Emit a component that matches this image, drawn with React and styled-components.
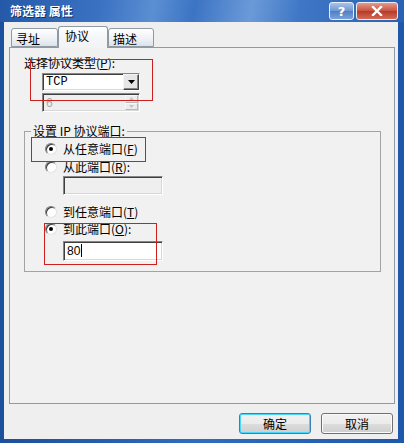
import styled, { createGlobalStyle } from "styled-components";

const GlobalStyle = createGlobalStyle`
  html, body {
    margin: 0;
    padding: 0;
  }
  body {
    font-family: "Noto Sans CJK SC", sans-serif;
    font-size: 12px;
    color: #000;
  }
`;

/*----------window frame + caption--------*/
const Frame = styled.div`
  position: relative;
  width: 404px;
  height: 443px;
  box-sizing: border-box;
  display: flex;
  flex-direction: column;
  overflow: hidden;
  background: linear-gradient(to right, #1c4f9c, #2f6cc0 50%, #1d58ab);
`;

const TitleBar = styled.div`
  height: 22px;
  display: flex;
  align-items: center;
  padding: 0 6px 0 10px;
  background: linear-gradient(100deg, #2559a8 0%, #3b72c2 25%, #5b8fd3 38%, #3c74c4 48%, #6b9ad8 62%, #3f77c6 74%, #2a62b3 100%);
`;

const Title = styled.span`
  color: #fff;
  font-weight: bold;
  font-size: 12px;
  line-height: 14px;
  text-shadow: 1px 1px 0 #0c2f6e;
`;

const CaptionButtons = styled.div`
  margin-left: auto;
  display: flex;
  gap: 2px;
`;

const CaptionButton = styled.div`
  width: ${(p) => p.$w}px;
  height: 18px;
  box-sizing: border-box;
  border: 1px solid #e8eef8;
  border-radius: 3px;
  display: flex;
  align-items: center;
  justify-content: center;
  color: #fff;
  font-family: "DejaVu Sans", sans-serif;
  font-weight: bold;
  font-size: 13px;
  background: ${(p) =>
    p.$close
      ? "linear-gradient(#e39a8c, #c9513f 50%, #b73a28 51%, #d16a55)"
      : "linear-gradient(#a9c3e8, #6d97d2 50%, #4f7fc4 51%, #7aa2d8)"};
`;

/*----------client area--------*/
const Client = styled.div`
  flex: 1;
  margin: 0 6px 4px 4px;
  background: #efefef;
  display: flex;
  flex-direction: column;
  padding-top: 4px;
`;

const TabStrip = styled.div`
  height: 21px;
  display: flex;
  align-items: flex-end;
  padding-left: 7px;
  position: relative;
  z-index: 1;
`;

const Tab = styled.div`
  width: ${(p) => p.$w}px;
  height: ${(p) => (p.$active ? 22 : 19)}px;
  margin-bottom: ${(p) => (p.$active ? -1 : 0)}px;
  box-sizing: border-box;
  border: 1px solid #8f9aa3;
  border-bottom: ${(p) => (p.$active ? "none" : "1px solid #8f9aa3")};
  border-radius: 3px 3px 0 0;
  padding: ${(p) => (p.$active ? "2px 0 0 6px" : "3px 0 0 4px")};
  line-height: 14px;
  font-size: 12px;
  background: ${(p) =>
    p.$active
      ? "linear-gradient(#ffffff, #f4f6fa 50%, #f3f3f3)"
      : "linear-gradient(#ffffff, #eef0f4 60%, #dde2ea)"};
`;

const Panel = styled.div`
  margin: 0 3px 0 5px;
  height: 357px;
  box-sizing: border-box;
  border: 1px solid #8f9aa3;
  background: #f1f1f1;
  padding: 8px 0 0 14px;
  display: flex;
  flex-direction: column;
  align-items: flex-start;
`;

const Label = styled.div`
  line-height: 14px;
  height: 14px;
  white-space: nowrap;
`;

const SunkenBox = styled.div`
  margin: ${(p) => p.$m};
  width: ${(p) => p.$w}px;
  height: ${(p) => p.$h}px;
  box-sizing: border-box;
  display: flex;
  align-items: center;
  border-style: solid;
  border-width: 1px;
  border-color: #868686 #ffffff #ffffff #868686;
  box-shadow: inset 1px 1px 0 #3f3f3f, inset -1px -1px 0 #d8d8d8;
  background: ${(p) => (p.$disabled ? "#efefef" : "#fff")};
  color: ${(p) => (p.$disabled ? "#a8a8a8" : "#000")};
`;

const BoxText = styled.span`
  flex: 1;
  padding-left: 3px;
  font-family: ${(p) =>
    p.$mono ? '"Liberation Mono", monospace' : '"Liberation Sans", sans-serif'};
  font-size: 12px;
  line-height: 14px;
`;

const Caret = styled.span`
  display: inline-block;
  width: 1px;
  height: 13px;
  background: #000;
  vertical-align: -2px;
  margin-left: 1px;
`;

const DropButton = styled.div`
  width: 16px;
  height: 16px;
  box-sizing: border-box;
  border-style: solid;
  border-width: 1px;
  border-color: #f4f4f4 #404040 #404040 #f4f4f4;
  box-shadow: inset -1px -1px 0 #868686;
  background: #e6e6e6;
  display: flex;
  align-items: center;
  justify-content: center;
`;

const SpinButtons = styled.div`
  width: 13px;
  height: 15px;
  margin-right: 1px;
  display: flex;
  flex-direction: column;
`;

const SpinHalf = styled.div`
  flex: 1;
  box-sizing: border-box;
  border-style: solid;
  border-width: 1px;
  border-color: #f8f8f8 #b8b8b8 #b8b8b8 #f8f8f8;
  background: #ececec;
  display: flex;
  align-items: center;
  justify-content: center;
`;

/*----------group box + radios--------*/
const Group = styled.fieldset`
  margin: 12px 0 0 0;
  width: 357px;
  height: 148px;
  box-sizing: border-box;
  border: 1px solid #a3a3a3;
  padding: 0 0 0 20px;
  min-width: 0;
  display: flex;
  flex-direction: column;
  align-items: flex-start;
`;

const Legend = styled.legend`
  padding: 0 2px;
  margin-left: -14px;
  line-height: 14px;
  font-size: 12px;
`;

const RadioRow = styled.div`
  display: flex;
  align-items: center;
  gap: 6px;
  height: 14px;
  margin-top: ${(p) => p.$top}px;
  line-height: 14px;
  white-space: nowrap;
`;

const RadioDot = styled.span`
  position: relative;
  width: 12px;
  height: 12px;
  box-sizing: border-box;
  border-radius: 50%;
  border: 1px solid;
  border-color: #7c7c7c #e2e2e2 #e2e2e2 #7c7c7c;
  box-shadow: inset 1px 1px 0 #3a3a3a;
  background: #fff;

  &::after {
    content: "";
    display: ${(p) => (p.$checked ? "block" : "none")};
    position: absolute;
    left: 3px;
    top: 3px;
    width: 4px;
    height: 4px;
    border-radius: 50%;
    background: #000;
  }
`;

/*----------dialog buttons--------*/
const ButtonRow = styled.div`
  display: flex;
  justify-content: flex-end;
  gap: 10px;
  margin-top: 9px;
  padding-right: 5px;
`;

const DialogButton = styled.button`
  width: 72px;
  height: 21px;
  padding: 0;
  border: 1px solid ${(p) => (p.$default ? "#3c7fb1" : "#707070")};
  border-radius: 3px;
  box-shadow: ${(p) =>
    p.$default ? "inset 0 0 0 1px #48d8fb" : "inset 0 0 0 1px #fbfbfb"};
  background: linear-gradient(#f2f2f2, #ebebeb 50%, #dddddd 51%, #cfcfcf);
  font-family: "Noto Sans CJK SC", sans-serif;
  font-size: 12px;
  line-height: 14px;
  color: #000;
`;

/*----------annotation boxes over the dialog--------*/
const Mark = styled.div`
  position: absolute;
  border: 1px solid #cc1f1f;
  box-sizing: border-box;
  pointer-events: none;
`;

const marks = [
  { left: 30, top: 59, width: 123, height: 42 },
  { left: 31, top: 137, width: 115, height: 25 },
  { left: 44, top: 223, width: 113, height: 42 },
];

const Accel = ({ k }) => (
  <>
    (<u>{k}</u>)
  </>
);

const App = () => {
  return (
    <>
      <GlobalStyle />
      <Frame>
        <TitleBar>
          <Title>筛选器 属性</Title>
          <CaptionButtons>
            <CaptionButton $w={25}>?</CaptionButton>
            <CaptionButton $w={42} $close>
              <svg width="12" height="10" viewBox="0 0 12 10">
                <path
                  d="M2 1 L10 9 M10 1 L2 9"
                  stroke="#fff"
                  strokeWidth="2.4"
                  strokeLinecap="square"
                />
              </svg>
            </CaptionButton>
          </CaptionButtons>
        </TitleBar>

        <Client>
          <TabStrip>
            <Tab $w={47}>寻址</Tab>
            <Tab $w={50} $active>
              协议
            </Tab>
            <Tab $w={46}>描述</Tab>
          </TabStrip>

          <Panel>
            <Label>
              选择协议类型<Accel k="P" />:
            </Label>
            <SunkenBox $m="3px 0 0 18px" $w={98} $h={18}>
              <BoxText $mono>TCP</BoxText>
              <DropButton>
                <svg width="7" height="4" viewBox="0 0 7 4">
                  <path d="M0 0 H7 L3.5 4 Z" fill="#000" />
                </svg>
              </DropButton>
            </SunkenBox>
            <SunkenBox $m="2px 0 0 18px" $w={98} $h={19} $disabled>
              <BoxText>6</BoxText>
              <SpinButtons>
                <SpinHalf>
                  <svg width="5" height="3" viewBox="0 0 5 3">
                    <path d="M0 3 H5 L2.5 0 Z" fill="#c4c4c4" />
                  </svg>
                </SpinHalf>
                <SpinHalf>
                  <svg width="5" height="3" viewBox="0 0 5 3">
                    <path d="M0 0 H5 L2.5 3 Z" fill="#c4c4c4" />
                  </svg>
                </SpinHalf>
              </SpinButtons>
            </SunkenBox>

            <Group>
              <Legend>设置 IP 协议端口:</Legend>
              <RadioRow $top={4}>
                <RadioDot $checked />
                <span>
                  从任意端口<Accel k="F" />
                </span>
              </RadioRow>
              <RadioRow $top={4}>
                <RadioDot />
                <span>
                  从此端口<Accel k="R" />:
                </span>
              </RadioRow>
              <SunkenBox $m="2px 0 0 18px" $w={100} $h={19} $disabled />
              <RadioRow $top={10}>
                <RadioDot />
                <span>
                  到任意端口<Accel k="T" />
                </span>
              </RadioRow>
              <RadioRow $top={3}>
                <RadioDot $checked />
                <span>
                  到此端口<Accel k="O" />:
                </span>
              </RadioRow>
              <SunkenBox $m="5px 0 0 18px" $w={100} $h={20}>
                <BoxText>
                  80
                  <Caret />
                </BoxText>
              </SunkenBox>
            </Group>
          </Panel>

          <ButtonRow>
            <DialogButton $default>确定</DialogButton>
            <DialogButton>取消</DialogButton>
          </ButtonRow>
        </Client>

        {marks.map((m, i) => (
          <Mark key={i} style={m} />
        ))}
      </Frame>
    </>
  );
};

export default App;
